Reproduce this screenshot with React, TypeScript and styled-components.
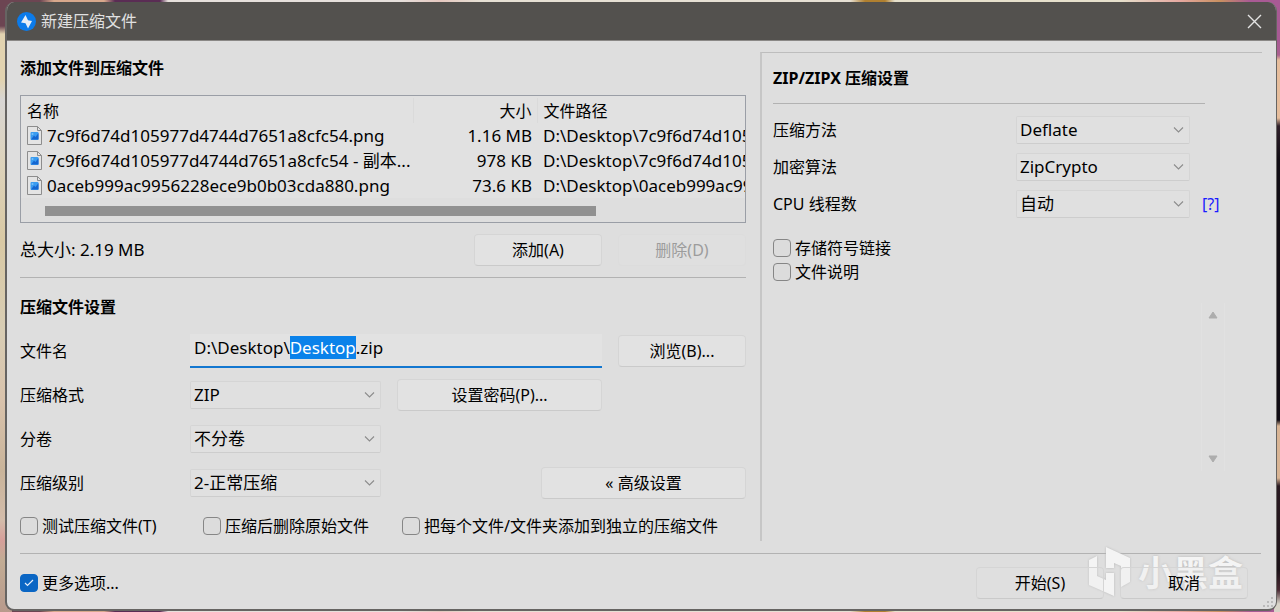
import React, { useEffect, useRef } from "react";
import styled, { createGlobalStyle } from "styled-components";

const Global = createGlobalStyle`
  *, *::before, *::after { box-sizing: border-box; }
  body { margin: 0; }
  body, button, input, select, table {
    font-family: "Noto Sans", "Noto Sans CJK SC", sans-serif;
    font-size: 16px;
    line-height: 24px;
    color: #000;
  }
`;

const Desktop = styled.div`
  min-height: 100vh;
  display: flex;
  padding: 2px 3px 1px 5px;
  background:
    linear-gradient(180deg, #a85a94 0 40px, #ab6190 55px, #e6bd9c 60px 118px, #30202a 126px, #110c14 160px 420px, #d8b494 426px 478px, #2a1a22 486px, #1c1218 570px, #4a2a34 590px, #d8d4c8 604px) right / 6px 100% no-repeat,
    linear-gradient(180deg, #6c4552 0 26px, #e2d3b0 34px 80px, #d8d6d4 100px, #ddd3bc 160px, #d9c9a4 240px, #d8cdb4 330px, #d9c3ac 400px, #c9b49a 470px, #d3bcaa 520px, #d69f9a 540px, #c2ac94 560px, #b89a8c 612px) left / 12px 100% no-repeat,
    linear-gradient(90deg, #6c4552 0 40px, #d8a88c 54px 104px, #5a2c54 115px 160px, #e6e0dc 168px 400px, #e6c8c0 440px, #e6e0d4 480px 850px, #b08030 865px 885px, #e6e0cc 895px 1120px, #e6a8a0 1180px, #c89060 1220px, #a85a94 1250px);
`;

const Dialog = styled.main`
  flex: 1;
  min-width: 0;
  display: flex;
  flex-direction: column;
  position: relative;
  background: #dedede;
  border: solid #666462;
  border-width: 0 1px 2px 2px;
  border-radius: 9px;
  overflow: hidden;
`;

const TitleBar = styled.header`
  display: flex;
  align-items: center;
  gap: 5px;
  height: 39px;
  padding: 0 14px 0 10px;
  background: #53514e;
  border-bottom: 1px solid #8a8886;
  color: #e0e0e0;
`;

const Title = styled.h1`
  flex: 1;
  margin: 0;
  font-size: 16px;
  font-weight: 400;
`;

const CloseButton = styled.button`
  display: flex;
  padding: 0;
  border: 0;
  background: none;
`;

const Columns = styled.div`
  display: grid;
  grid-template-columns: minmax(0, 1fr) 502px;
  gap: 14px;
  padding: 11px 14px 0 13px;
`;

const LeftColumn = styled.section`
  padding: 4px 0 3px;
`;

const Heading = styled.h2`
  margin: 0;
  font-size: 16px;
  font-weight: 700;
`;

const SectionHeading = styled(Heading)`
  margin-top: 17px;
`;

const Rule = styled.hr<{ $gap: number }>`
  height: 1px;
  margin: ${(p) => p.$gap}px 0 0;
  border: 0;
  background: #b2b2b2;
`;

const FileBox = styled.div`
  height: 128px;
  margin: 15px 0 11px;
  padding-top: 2px;
  border: 1px solid #9a9ea6;
  background: #e1e1e1;
  overflow: hidden;
  display: flex;
  flex-direction: column;
`;

const FileTable = styled.table`
  width: 100%;
  table-layout: fixed;
  border-collapse: collapse;
  th, td {
    height: 25px;
    padding: 0 6px;
    font-weight: 400;
    text-align: left;
    white-space: nowrap;
    overflow: hidden;
  }
  td { font-size: 17px; }
  th { border-right: 1px solid #dadada; }
  th:last-child { border-right: 0; }
  th:first-child { width: 392px; }
  th:nth-child(2) { width: 124px; }
  td:first-child { padding-right: 0; }
  th:nth-child(2), td:nth-child(2) { text-align: right; padding-right: 5px; }
  th:last-child, td:last-child { padding-right: 0; }
`;

const NameCell = styled.span`
  display: flex;
  align-items: center;
  gap: 5px;
  svg { flex-shrink: 0; }
`;

const ScrollTrack = styled.div`
  flex: 1;
  padding: 8px 149px 0 24px;
  background: #dedede;
`;

const ScrollThumb = styled.div`
  height: 10px;
  background: #919191;
`;

const Row = styled.div`
  display: flex;
  align-items: center;
`;

const Summary = styled(Row)`
  gap: 16px;
  span { flex: 1; font-size: 17px; }
`;

const Button = styled.button<{ $width: number }>`
  width: ${(p) => p.$width}px;
  height: 32px;
  padding: 0;
  border: 1px solid #d5d5d5;
  border-bottom-color: #cacaca;
  border-radius: 4px;
  background: #e2e2e2;
  &:disabled {
    color: #9c9c9c;
    border-color: #dcdcdc;
    background: #dfdfdf;
  }
`;

const SettingsGrid = styled.div`
  display: grid;
  grid-template-columns: 170px minmax(0, 1fr);
  grid-auto-rows: 32px;
  row-gap: 12px;
  align-items: center;
  margin-top: 16px;
`;

const Controls = styled(Row)<{ $spread?: boolean }>`
  gap: 16px;
  justify-content: ${(p) => (p.$spread ? "space-between" : "flex-start")};
`;

const PathInput = styled.input`
  flex: 1;
  min-width: 0;
  height: 34px;
  padding: 0 4px 6px;
  border: 0;
  border-bottom: 2px solid #1377d0;
  outline: 0;
  background: #e2e2e2;
  font-size: 17px;
  &::selection { background: #0a82ea; color: #fff; }
`;

const SelectWrap = styled.span<{ $width: number }>`
  position: relative;
  display: inline-flex;
  width: ${(p) => p.$width}px;
  svg { position: absolute; right: 6px; top: 10px; pointer-events: none; }
`;

const SelectBox = styled.select`
  appearance: none;
  width: 100%;
  height: 28px;
  padding: 0 24px 0 3px;
  border: 1px solid #d5d5d5;
  border-bottom-color: #cdcdcd;
  border-radius: 2px;
  background: #e0e0e0;
  font-size: 17px;
`;

const CheckLabel = styled.label`
  display: inline-flex;
  align-items: center;
  gap: 4px;
  white-space: nowrap;
`;

const CheckMark = styled.span`
  position: relative;
  display: inline-flex;
  svg { position: absolute; left: 4px; top: 5px; pointer-events: none; }
`;

const CheckBox = styled.input`
  appearance: none;
  width: 18px;
  height: 18px;
  margin: 0;
  border: 1px solid #868686;
  border-radius: 4px;
  background: #dcdcdc;
  &:checked { background: #0a66c4; border-color: #0a66c4; }
`;

const CheckRow = styled.div`
  display: grid;
  grid-template-columns: 183px 199px auto;
  margin-top: 15px;
`;

const RightPanel = styled.section`
  display: flex;
  flex-direction: column;
  padding: 13px 36px 0 11px;
  border-top: 1px solid #bdbdbd;
  border-left: 2px solid #c6c6c6;
`;

const PanelTop = styled.div`
  padding-right: 21px;
`;

const PanelGrid = styled.div`
  display: grid;
  grid-template-columns: minmax(0, 1fr) 174px 36px;
  grid-auto-rows: 28px;
  row-gap: 9px;
  align-items: center;
  margin: 12px 0 18px;
`;

const HelpLink = styled.a`
  grid-column: 3;
  padding-left: 12px;
  color: #1a1aff;
  text-decoration: none;
`;

const CheckStack = styled.div`
  display: flex;
  flex-direction: column;
  align-items: flex-start;
`;

const NoteArea = styled.div`
  display: flex;
  flex-direction: column;
  align-self: flex-end;
  align-items: center;
  justify-content: space-between;
  width: 24px;
  height: 168px;
  margin: 19px 1px 0 0;
  padding: 8px 0;
  border: solid #e1e1e1;
  border-width: 0 1px;
`;

const Footer = styled.footer`
  padding: 0 15px 10px 13px;
`;

const FooterRow = styled(Row)`
  position: relative;
  z-index: 1;
  gap: 16px;
  padding: 13px 13px 0 0;
  label { margin-right: auto; }
  button { background: rgba(230, 230, 230, 0.2); }
`;

const Watermark = styled.div`
  position: absolute;
  right: 33px;
  bottom: 13px;
  display: flex;
  align-items: center;
  gap: 7px;
  color: #f4f4f4;
  font: 700 35px/44px "Noto Sans CJK SC", sans-serif;
  text-shadow: 0 0 3px #b8b8b8;
  pointer-events: none;
  svg { filter: drop-shadow(0 0 1px #b8b8b8); }
`;

const Grip = styled.svg`
  position: absolute;
  right: 2px;
  bottom: 1px;
`;

const AppIcon = () => (
  <svg width="19" height="19" viewBox="0 0 19 19" aria-hidden="true">
    <circle cx="9.5" cy="9.5" r="9.5" fill="#0b7bea" />
    <path d="M8.500 3L4 10.500l4.500.7L11 16.500 15 9l-4-.8z" fill="#e6eef6" />
  </svg>
);

const ImageFileIcon = () => (
  <svg width="15" height="19" viewBox="0 0 15 19" aria-hidden="true">
    <path d="M.5.500h10l4 4v14H.5z" fill="#e4e4e4" stroke="#8d8d8d" />
    <path d="M10.500.500v4h4" fill="none" stroke="#8d8d8d" />
    <rect x="3.500" y="6" width="8" height="8" rx="1" fill="#3a9cf0" />
    <path d="M4 13.500l3-4 1.500 1.500L11.500 7v6.500z" fill="#1566d0" />
    <circle cx="5.500" cy="8" r="1" fill="#7cc4fa" />
  </svg>
);

type SelectProps = { id: string; width: number; value: string };
const Select = ({ id, width, value }: SelectProps) => (
  <SelectWrap $width={width}>
    <SelectBox id={id} defaultValue={value}>
      <option>{value}</option>
    </SelectBox>
    <svg width="11" height="8" viewBox="0 0 11 8" aria-hidden="true">
      <path d="M1 1.500l4.500 4.500L10 1.500" fill="none" stroke="#8c8c8c" strokeWidth="1.100" />
    </svg>
  </SelectWrap>
);

const Check = ({ label, checked }: { label: string; checked?: boolean }) => (
  <CheckLabel>
    <CheckMark>
      <CheckBox type="checkbox" defaultChecked={checked} />
      {checked && (
        <svg width="10" height="8" viewBox="0 0 10 8" aria-hidden="true">
          <path d="M1 4l2.500 2.500L9 1" fill="none" stroke="#e4eefa" strokeWidth="1.200" />
        </svg>
      )}
    </CheckMark>
    {label}
  </CheckLabel>
);

const files = [
  { name: "7c9f6d74d105977d4744d7651a8cfc54.png", size: "1.16 MB", path: "D:\\Desktop\\7c9f6d74d105" },
  { name: "7c9f6d74d105977d4744d7651a8cfc54 - 副本...", size: "978 KB", path: "D:\\Desktop\\7c9f6d74d105" },
  { name: "0aceb999ac9956228ece9b0b03cda880.png", size: "73.6 KB", path: "D:\\Desktop\\0aceb999ac99" },
];

export default function App() {
  const pathRef = useRef<HTMLInputElement>(null);

  // Preselect the base name so that typing replaces it but keeps the extension.
  useEffect(() => {
    pathRef.current?.focus();
    pathRef.current?.setSelectionRange(11, 18);
  }, []);

  return (
    <>
      <Global />
      <Desktop>
        <Dialog>
          <TitleBar>
            <AppIcon />
            <Title>新建压缩文件</Title>
            <CloseButton aria-label="关闭">
              <svg width="15" height="15" viewBox="0 0 15 15">
                <path d="M1 1l13 13M14 1L1 14" stroke="#e4e4e4" strokeWidth="1.400" />
              </svg>
            </CloseButton>
          </TitleBar>

          <Columns>
            <LeftColumn>
              <Heading>添加文件到压缩文件</Heading>
              <FileBox>
                <FileTable>
                  <thead>
                    <tr>
                      <th>名称</th>
                      <th>大小</th>
                      <th>文件路径</th>
                    </tr>
                  </thead>
                  <tbody>
                    {files.map((f) => (
                      <tr key={f.name}>
                        <td>
                          <NameCell>
                            <ImageFileIcon />
                            {f.name}
                          </NameCell>
                        </td>
                        <td>{f.size}</td>
                        <td>{f.path}</td>
                      </tr>
                    ))}
                  </tbody>
                </FileTable>
                <ScrollTrack>
                  <ScrollThumb />
                </ScrollTrack>
              </FileBox>
              <Summary>
                <span>总大小: 2.19 MB</span>
                <Button $width={128}>添加(A)</Button>
                <Button $width={128} disabled>删除(D)</Button>
              </Summary>
              <Rule $gap={11} />
              <SectionHeading>压缩文件设置</SectionHeading>
              <SettingsGrid>
                <label htmlFor="path">文件名</label>
                <Controls>
                  <PathInput id="path" ref={pathRef} defaultValue={"D:\\Desktop\\Desktop.zip"} />
                  <Button $width={128}>浏览(B)...</Button>
                </Controls>
                <label htmlFor="format">压缩格式</label>
                <Controls>
                  <Select id="format" width={191} value="ZIP" />
                  <Button $width={205}>设置密码(P)...</Button>
                </Controls>
                <label htmlFor="split">分卷</label>
                <Controls>
                  <Select id="split" width={191} value="不分卷" />
                </Controls>
                <label htmlFor="level">压缩级别</label>
                <Controls $spread>
                  <Select id="level" width={191} value="2-正常压缩" />
                  <Button $width={205}>« 高级设置</Button>
                </Controls>
              </SettingsGrid>
              <CheckRow>
                <Check label="测试压缩文件(T)" />
                <Check label="压缩后删除原始文件" />
                <Check label="把每个文件/文件夹添加到独立的压缩文件" />
              </CheckRow>
            </LeftColumn>

            <RightPanel>
              <PanelTop>
                <Heading>ZIP/ZIPX 压缩设置</Heading>
                <Rule $gap={13} />
              </PanelTop>
              <PanelGrid>
                <label htmlFor="method">压缩方法</label>
                <Select id="method" width={174} value="Deflate" />
                <span />
                <label htmlFor="cipher">加密算法</label>
                <Select id="cipher" width={174} value="ZipCrypto" />
                <span />
                <label htmlFor="threads">CPU 线程数</label>
                <Select id="threads" width={174} value="自动" />
                <HelpLink href="#threads">[?]</HelpLink>
              </PanelGrid>
              <CheckStack>
                <Check label="存储符号链接" />
                <Check label="文件说明" />
              </CheckStack>
              <NoteArea>
                <svg width="10" height="8" viewBox="0 0 10 8" aria-hidden="true">
                  <path d="M5 1L9 7H1z" fill="#adadad" stroke="#adadad" strokeLinejoin="round" />
                </svg>
                <svg width="10" height="8" viewBox="0 0 10 8" aria-hidden="true">
                  <path d="M5 7L9 1H1z" fill="#adadad" stroke="#adadad" strokeLinejoin="round" />
                </svg>
              </NoteArea>
            </RightPanel>
          </Columns>

          <Watermark>
            <svg width="42" height="50" viewBox="0 0 42 50" aria-hidden="true">
              <path d="M0 14l8-4v20l9 4v-7h8v23L0 39zM17 1l24 11v24l-9 5V20l-7-3v5h-8z" fill="#f4f4f4" />
            </svg>
            小黑盒
          </Watermark>

          <Footer>
            <Rule $gap={12} />
            <FooterRow>
              <Check label="更多选项..." checked />
              <Button $width={128}>开始(S)</Button>
              <Button $width={128}>取消</Button>
            </FooterRow>
          </Footer>

          <Grip width="12" height="12" viewBox="0 0 12 12" aria-hidden="true">
            <path d="M9 1h2v2H9zM5 5h2v2H5zM9 5h2v2H9zM1 9h2v2H1zM5 9h2v2H5zM9 9h2v2H9z" fill="#bababa" />
          </Grip>
        </Dialog>
      </Desktop>
    </>
  );
}
